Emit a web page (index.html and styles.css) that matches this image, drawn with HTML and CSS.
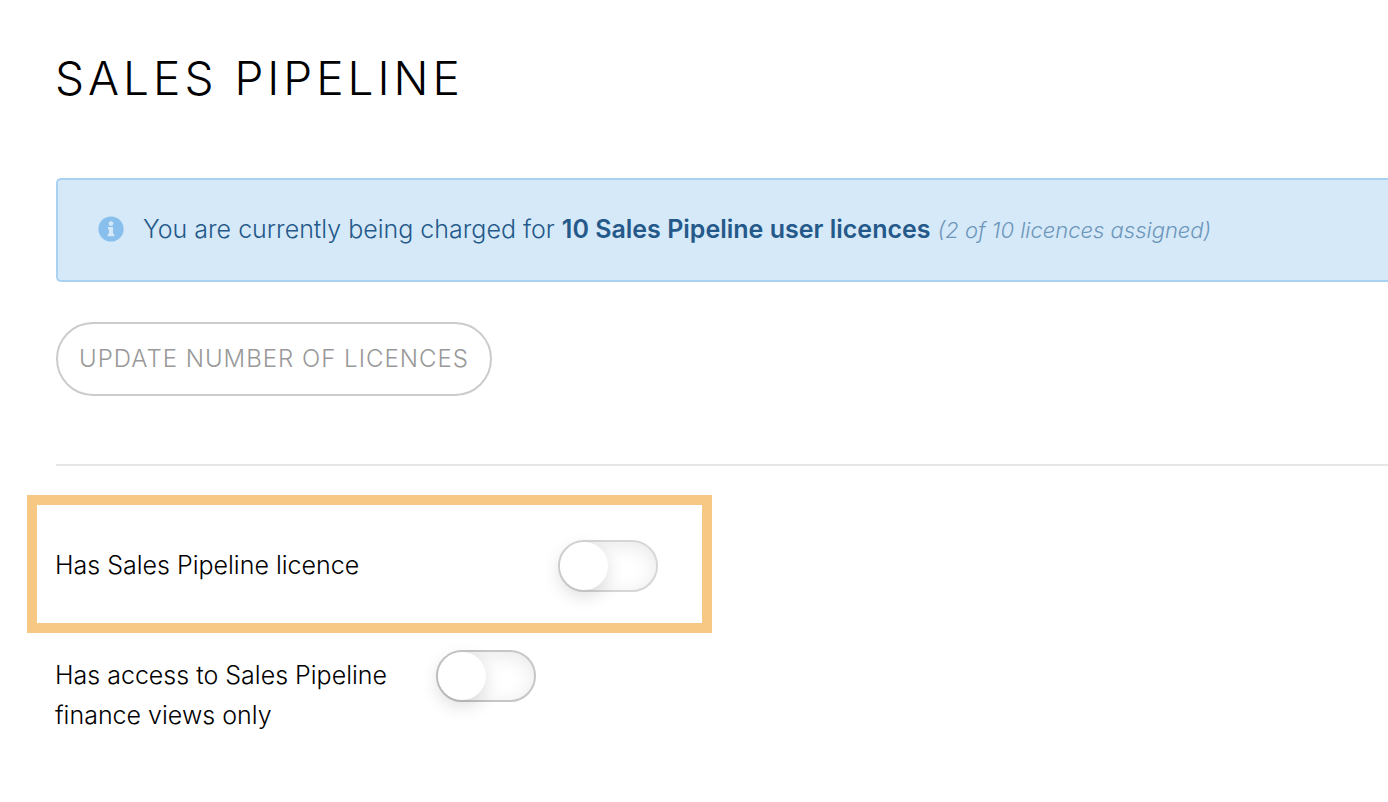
FILE: index.html
```html
<!DOCTYPE html>
<html lang="en">
<head>
	<meta charset="UTF-8">
	<meta name="viewport" content="width=device-width, initial-scale=1">
	<title>Sales Pipeline</title>
	<link rel="stylesheet" href="styles.css">
</head>
<body>
	<main class="page">
		<h1 class="title">SALES PIPELINE</h1>

		<div class="notice">
			<svg class="notice-icon" viewBox="0 0 26 26" aria-hidden="true">
				<circle cx="13" cy="13" r="12.6" fill="#88bfec"/>
				<circle cx="13" cy="7.6" r="2.3" fill="#d6e9f8"/>
				<path d="M10 11h5v6.8h1.2v2.4H9.8v-2.4H11v-4.4h-1z" fill="#d6e9f8"/>
			</svg>
			<p class="notice-text">You are currently being charged for <strong>10 Sales Pipeline user licences</strong> <em>(2 of 10 licences assigned)</em></p>
		</div>

		<button type="button" class="btn">UPDATE NUMBER OF LICENCES</button>

		<hr class="divider">

		<div class="option highlight">
			<label class="option-label" for="licence">Has Sales Pipeline licence</label>
			<input class="toggle toggle-light" type="checkbox" id="licence">
		</div>
		<div class="option">
			<label class="option-label" for="finance">Has access to Sales Pipeline finance views only</label>
			<input class="toggle" type="checkbox" id="finance">
		</div>
	</main>
</body>
</html>
```
FILE: styles.css
```css
* {
    box-sizing: border-box;
}
body {
    margin: 0;
    background: #fff;
    color: #000;
    font: 300 25px/40px Inter, "Open Sans", sans-serif;
}
.page {
    padding: 50px 0 50px 55px;
}
.title {
    margin: 0 0 72px;
    font-size: 46px;
    font-weight: 300;
    line-height: 56px;
    letter-spacing: 4px;
}

/* info bar, runs off to the right edge */
.notice {
    display: flex;
    align-items: center;
    gap: 19px;
    margin-left: 1px;
    padding: 29px 40px 31px;
    border: 2px solid #aad2f0;
    border-right: 0;
    border-radius: 5px 0 0 5px;
    background: #d6e9f8;
    color: #24598a;
}
.notice-icon {
    flex: none;
    width: 26px;
    height: 26px;
}
.notice-text {
    margin: 0;
}
.notice-text strong {
    font-weight: 600;
}
.notice-text em {
    font-size: 22px;
    line-height: 1;
    color: #6d97bb;
}

.btn {
    display: block;
    margin: 40px 0 68px 1px;
    padding: 15px 21px;
    border: 2px solid #ccc;
    border-radius: 37px;
    background: #fff;
    color: #999;
    font: inherit;
    font-size: 24px;
    line-height: 40px;
    letter-spacing: 1px;
}
.divider {
    margin: 0 0 0 1px;
    border: 0;
    border-top: 2px solid #e6e6e6;
}

/* toggles */
.option {
    display: flex;
    align-items: flex-start;
    width: 481px;
    max-width: 100%;
}
.option-label {
    width: 350px;
    margin-right: auto;
    padding-top: 5px;
}
.highlight {
    width: 685px;
    margin: 29px 0 17px -28px;
    padding: 35px 44px 31px 18px;
    border: 10px solid #f6c884;
}
.toggle {
    flex: none;
    appearance: none;
    width: 100px;
    height: 52px;
    margin: 0;
    border: 2px solid #c6c6c6;
    border-radius: 26px;
    background: #fff;
    box-shadow: inset 0 4px 20px rgba(0, 0, 0, .09);
}
.toggle::before {
    content: "";
    display: block;
    width: 48px;
    height: 48px;
    border-radius: 50%;
    background: #fff;
    box-shadow: 0 6px 18px rgba(0, 0, 0, .14);
}
.toggle:checked::before {
    margin-left: auto;
}
.toggle-light {
    border-color: #d6d6d6;
}
```
